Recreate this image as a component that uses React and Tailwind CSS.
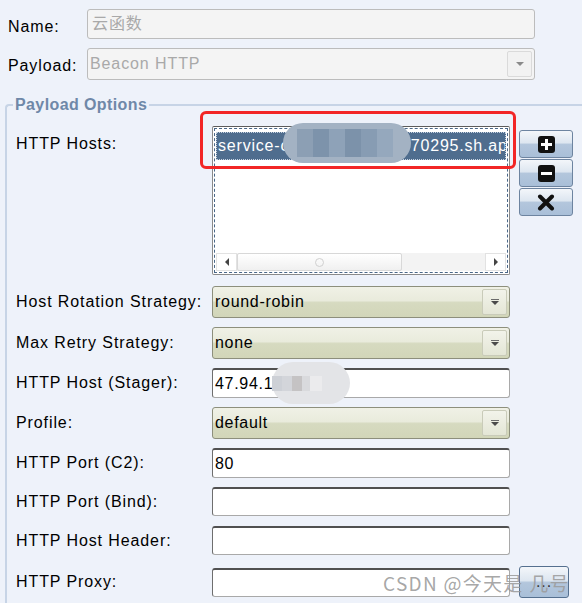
import React from "react";

const selectBg =
  "bg-[linear-gradient(to_bottom,#f0f1e6_0%,#e9ebdc_45%,#d6dac0_52%,#d2d6b9_100%)]";
const btnBg =
  "bg-[linear-gradient(to_bottom,#f3f6fa_0%,#dde6f0_45%,#b3c6dc_52%,#a9bfd8_100%)]";

const Arrow = () => (
  <div className="flex flex-col items-center gap-[1px]">
    <div className="w-[8px] h-[1px] bg-[#6b6b6b]" />
    <div className="w-0 h-0 border-l-[4px] border-r-[4px] border-t-[4px] border-l-transparent border-r-transparent border-t-[#4a4a4a]" />
  </div>
);

const Select = ({ value, h = "h-[32px]" }) => (
  <div
    className={`w-[298px] ${h} ${selectBg} border border-[#8d8f7c] rounded-[3px] flex items-center pl-[2px] pr-[2px]`}
  >
    <span className="flex-1 tracking-[0.7px] text-[16px]">{value}</span>
    <div className="w-[25px] h-[26px] border border-[#c9cbb9] rounded-[2px] bg-[linear-gradient(to_bottom,#f2f3ea,#e4e6d6)] flex items-center justify-center">
      <Arrow />
    </div>
  </div>
);

const Input = ({ value, h = "h-[30px]" }) => (
  <div
    className={`w-[298px] ${h} bg-white border border-[#a9a9a9] border-t-[#505050] border-l-[#6e6e6e] border-t-2 rounded-[3px] flex items-center pl-[2px] text-[16px] tracking-[0.7px]`}
  >
    {value}
  </div>
);

const Row = ({ label, mt, children }) => (
  <div className={`flex items-center ${mt}`}>
    <div className="w-[205px] pl-[9px] whitespace-nowrap">{label}</div>
    {children}
  </div>
);

const SideButton = ({ children }) => (
  <div
    className={`w-[54px] h-[28px] ${btnBg} border border-[#6d84a0] rounded-[3px] flex items-center justify-center`}
  >
    {children}
  </div>
);

export default function App() {
  return (
    <div className="relative w-[582px] h-[603px] overflow-hidden bg-[#eef2fa] text-black text-[16px] tracking-[0.9px] [font-family:Liberation_Sans,Arial,Noto_Sans_CJK_SC,sans-serif]">
      <div className="pt-[9px]">
        <div className="flex items-center">
          <div className="w-[87px] pl-[8px] pt-[5px]">Name:</div>
          <div className="w-[448px] h-[30px] bg-[#f4f4f4] border border-[#bcbcbc] rounded-[3px] flex items-center pl-[4px] text-[#a9a9a9] text-[16px]">
            云函数
          </div>
        </div>
        <div className="flex items-center mt-[9px]">
          <div className="w-[87px] pl-[8px] pt-[4px]">Payload:</div>
          <div className="w-[448px] h-[32px] bg-[#f4f4f4] border border-[#bcbcbc] rounded-[3px] flex items-center pl-[2px] pr-[2px]">
            <span className="flex-1 text-[#a9a9a9] text-[16px] tracking-[0.9px]">Beacon HTTP</span>
            <div className="w-[25px] h-[26px] border border-[#dadada] rounded-[2px] bg-[#f2f2f2] flex items-center justify-center">
              <div className="w-0 h-0 border-l-[4px] border-r-[4px] border-t-[4px] border-l-transparent border-r-transparent border-t-[#8a8a8a]" />
            </div>
          </div>
        </div>
      </div>

      <fieldset className="mt-[13px] ml-[5px] border-t-2 border-l-2 border-[#c7d4e6] rounded-tl-[4px] pb-[20px]">
        <legend className="ml-[6px] px-[2px] font-bold text-[#6f88a8] tracking-[0.4px]">
          Payload Options
        </legend>

        <div className="flex items-start mt-[9px]">
          <div className="w-[205px] pl-[9px] pt-[6px]">HTTP Hosts:</div>
          <div className="w-[298px] h-[149px] bg-white border border-[#8a8a8a] border-t-[#5c5c5c] rounded-[2px] p-[1px]">
            <div className="w-full h-full border border-dashed border-[#4a6788] flex flex-col">
              <div className="mt-[3px] mx-[1px] h-[28px] bg-[#4f6d8e] border border-dotted border-[#c6d2e0] text-white text-[16px] tracking-[0.8px] flex items-center pl-[1px] overflow-hidden whitespace-nowrap">
                service-ck0aphd6-1259470295.sh.apigw
              </div>
              <div className="flex-1" />
              <div className="h-[18px] mb-[1px] mx-[1px] flex bg-[#f3f3f3]">
                <div className="w-[21px] h-full bg-white border border-[#e2e2e2] flex items-center justify-center">
                  <div className="w-0 h-0 border-t-[4px] border-b-[4px] border-r-[4px] border-t-transparent border-b-transparent border-r-[#444]" />
                </div>
                <div className="w-[165px] h-full bg-[linear-gradient(to_bottom,#ffffff,#f0f0f0)] border border-[#d8d8d8] rounded-[2px] flex items-center justify-center">
                  <div className="w-[9px] h-[9px] rounded-full border border-[#d0d0d0]" />
                </div>
                <div className="flex-1" />
                <div className="w-[21px] h-full bg-white border border-[#e2e2e2] flex items-center justify-center">
                  <div className="w-0 h-0 border-t-[4px] border-b-[4px] border-l-[4px] border-t-transparent border-b-transparent border-l-[#444]" />
                </div>
              </div>
            </div>
          </div>
          <div className="ml-[9px] mt-[4px] flex flex-col gap-[1px]">
            <SideButton>
              <svg width="17" height="17" viewBox="0 0 17 17">
                <rect x="0" y="0" width="17" height="17" rx="3" fill="#111" />
                <rect x="3" y="7" width="11" height="3" fill="#fff" />
                <rect x="7" y="3" width="3" height="11" fill="#fff" />
              </svg>
            </SideButton>
            <SideButton>
              <svg width="17" height="17" viewBox="0 0 17 17">
                <rect x="0" y="0" width="17" height="17" rx="3" fill="#111" />
                <rect x="3" y="7" width="11" height="3" fill="#fff" />
              </svg>
            </SideButton>
            <SideButton>
              <svg width="18" height="17" viewBox="0 0 18 17">
                <path d="M3 2.5 L15 14.5 M15 2.5 L3 14.5" stroke="#111" strokeWidth="4" strokeLinecap="round" />
              </svg>
            </SideButton>
          </div>
        </div>

        <Row label="Host Rotation Strategy:" mt="mt-[11px]">
          <Select value="round-robin" />
        </Row>
        <Row label="Max Retry Strategy:" mt="mt-[9px]">
          <Select value="none" />
        </Row>
        <Row label="HTTP Host (Stager):" mt="mt-[9px]">
          <Input value="47.94.155.136" />
        </Row>
        <Row label="Profile:" mt="mt-[9px]">
          <Select value="default" />
        </Row>
        <Row label="HTTP Port (C2):" mt="mt-[9px]">
          <Input value="80" />
        </Row>
        <Row label="HTTP Port (Bind):" mt="mt-[9px]">
          <Input value="" h="h-[29px]" />
        </Row>
        <Row label="HTTP Host Header:" mt="mt-[10px]">
          <Input value="" h="h-[29px]" />
        </Row>
        <div className="flex items-center mt-[11px]">
          <div className="w-[205px] pl-[9px]">HTTP Proxy:</div>
          <Input value="" h="h-[29px]" />
          <div
            className={`ml-[9px] w-[50px] h-[32px] ${btnBg} border border-[#55708f] rounded-[3px] flex items-center justify-center text-[#333]`}
          >
            ...
          </div>
        </div>
      </fieldset>

      {/* annotation overlays */}
      <div className="absolute left-[283px] top-[123px] w-[128px] h-[40px] rounded-[20px] bg-[#a3b2c3] flex items-center pl-[14px] gap-0">
        <div className="w-[16px] h-[28px] bg-[#8c9fb4]" />
        <div className="w-[16px] h-[28px] bg-[#7d93ab]" />
        <div className="w-[16px] h-[28px] bg-[#8ea2b8]" />
        <div className="w-[16px] h-[28px] bg-[#7c92aa]" />
        <div className="w-[16px] h-[28px] bg-[#879cb3]" />
        <div className="w-[16px] h-[28px] bg-[#95a8bd]" />
      </div>
      <div className="absolute left-[200px] top-[111px] w-[316px] h-[58px] border-[3px] border-[#f22626] rounded-[6px]" />
      <div className="absolute left-[272px] top-[362px] w-[78px] h-[42px] rounded-[21px] bg-[#e3e4e7] flex items-center pl-[0px]">
        <div className="w-[10px] h-[15px] bg-[#cdd0d6]" />
        <div className="w-[10px] h-[15px] bg-[#d3d5da]" />
        <div className="w-[10px] h-[15px] bg-[#c5c3c4]" />
        <div className="w-[8px] h-[15px] bg-[#d9dadd]" />
        <div className="w-[12px] h-[15px] bg-[#ebebed]" />
      </div>
      <div className="absolute left-[383px] top-[573px] leading-none text-[19px] tracking-[1.3px] text-[#9c9c9c]/90 [font-family:Noto_Sans_CJK_SC,sans-serif]">
        CSDN @今天是 几号
      </div>
    </div>
  );
}
